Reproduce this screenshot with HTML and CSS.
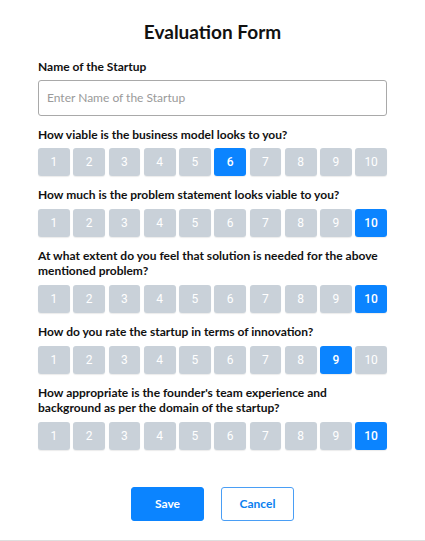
FILE: index.html
```html
<!DOCTYPE html>
<html>
<head>
<meta charset="utf-8">
<link rel="stylesheet" href="styles.css">
</head>
<body>
<div class="page">
  <h1 class="title">Evaluation Form</h1>
  <label class="label first">Name of the Startup</label>
  <input class="text-input" type="text" placeholder="Enter Name of the Startup">

  <div class="question">
    <div class="label">How viable is the business model looks to you?</div>
    <div class="scale">
      <span class="num">1</span><span class="num">2</span><span class="num">3</span><span class="num">4</span><span class="num">5</span><span class="num active">6</span><span class="num">7</span><span class="num">8</span><span class="num">9</span><span class="num">10</span>
    </div>
  </div>

  <div class="question">
    <div class="label">How much is the problem statement looks viable to you?</div>
    <div class="scale">
      <span class="num">1</span><span class="num">2</span><span class="num">3</span><span class="num">4</span><span class="num">5</span><span class="num">6</span><span class="num">7</span><span class="num">8</span><span class="num">9</span><span class="num active">10</span>
    </div>
  </div>

  <div class="question">
    <div class="label">At what extent do you feel that solution is needed for the above mentioned problem?</div>
    <div class="scale">
      <span class="num">1</span><span class="num">2</span><span class="num">3</span><span class="num">4</span><span class="num">5</span><span class="num">6</span><span class="num">7</span><span class="num">8</span><span class="num">9</span><span class="num active">10</span>
    </div>
  </div>

  <div class="question">
    <div class="label">How do you rate the startup in terms of innovation?</div>
    <div class="scale">
      <span class="num">1</span><span class="num">2</span><span class="num">3</span><span class="num">4</span><span class="num">5</span><span class="num">6</span><span class="num">7</span><span class="num">8</span><span class="num active">9</span><span class="num">10</span>
    </div>
  </div>

  <div class="question">
    <div class="label">How appropriate is the founder's team experience and background as per the domain of the startup?</div>
    <div class="scale">
      <span class="num">1</span><span class="num">2</span><span class="num">3</span><span class="num">4</span><span class="num">5</span><span class="num">6</span><span class="num">7</span><span class="num">8</span><span class="num">9</span><span class="num active">10</span>
    </div>
  </div>

  <div class="actions">
    <button class="btn btn-save">Save</button>
    <button class="btn btn-cancel">Cancel</button>
  </div>
</div>
<div class="bottom-line"></div>
</body>
</html>
```

FILE: styles.css
```css
html, body {
  margin: 0;
  padding: 0;
  background: #ffffff;
}

body {
  font-family: Lato, "Liberation Sans", sans-serif;
  color: #111111;
}

.page {
  padding: 20px 38px 0 38px;
  display: flex;
  flex-direction: column;
}

.title {
  margin: 0;
  font-size: 19px;
  line-height: 24px;
  font-weight: 700;
  text-align: center;
  color: #111;
}

.label {
  display: block;
  font-size: 12px;
  line-height: 15.6px;
  font-weight: 700;
  color: #111;
  margin-bottom: 6px;
}

.label.first {
  margin-top: 15px;
  margin-bottom: 5px;
}

.text-input {
  box-sizing: border-box;
  width: 100%;
  height: 36px;
  margin: 0;
  border: 1px solid #a9a9a9;
  border-radius: 3px;
  padding: 0 8px;
  font-family: Lato, "Liberation Sans", sans-serif;
  font-size: 12px;
  color: #333;
  outline: none;
}

.text-input::placeholder {
  color: #9a9a9a;
}

.question {
  margin-top: 11px;
}

.scale {
  display: flex;
  gap: 3.5px;
}

.num {
  flex: 1;
  height: 28px;
  display: flex;
  align-items: center;
  justify-content: center;
  background: #c9d1d9;
  color: #ffffff;
  border-radius: 3px;
  font-family: Roboto, "Liberation Sans", sans-serif;
  font-size: 12px;
  box-shadow: 0 1px 1px rgba(0, 0, 0, 0.08);
}

.num.active {
  background: #0b84ff;
  font-weight: 500;
}

.actions {
  display: flex;
  justify-content: center;
  gap: 17px;
  margin-top: 37px;
  margin-bottom: 19px;
}

.btn {
  box-sizing: border-box;
  width: 73px;
  height: 34px;
  border-radius: 3px;
  font-family: Lato, "Liberation Sans", sans-serif;
  font-size: 12px;
  font-weight: 700;
  cursor: pointer;
  margin: 0;
  padding: 0;
}

.btn-save {
  background: #0b84ff;
  color: #ffffff;
  border: 1px solid #0b84ff;
}

.btn-cancel {
  background: #ffffff;
  color: #0b7ff0;
  border: 1px solid #4a9ef5;
}

.bottom-line {
  height: 1px;
  background: #dedede;
}
```
